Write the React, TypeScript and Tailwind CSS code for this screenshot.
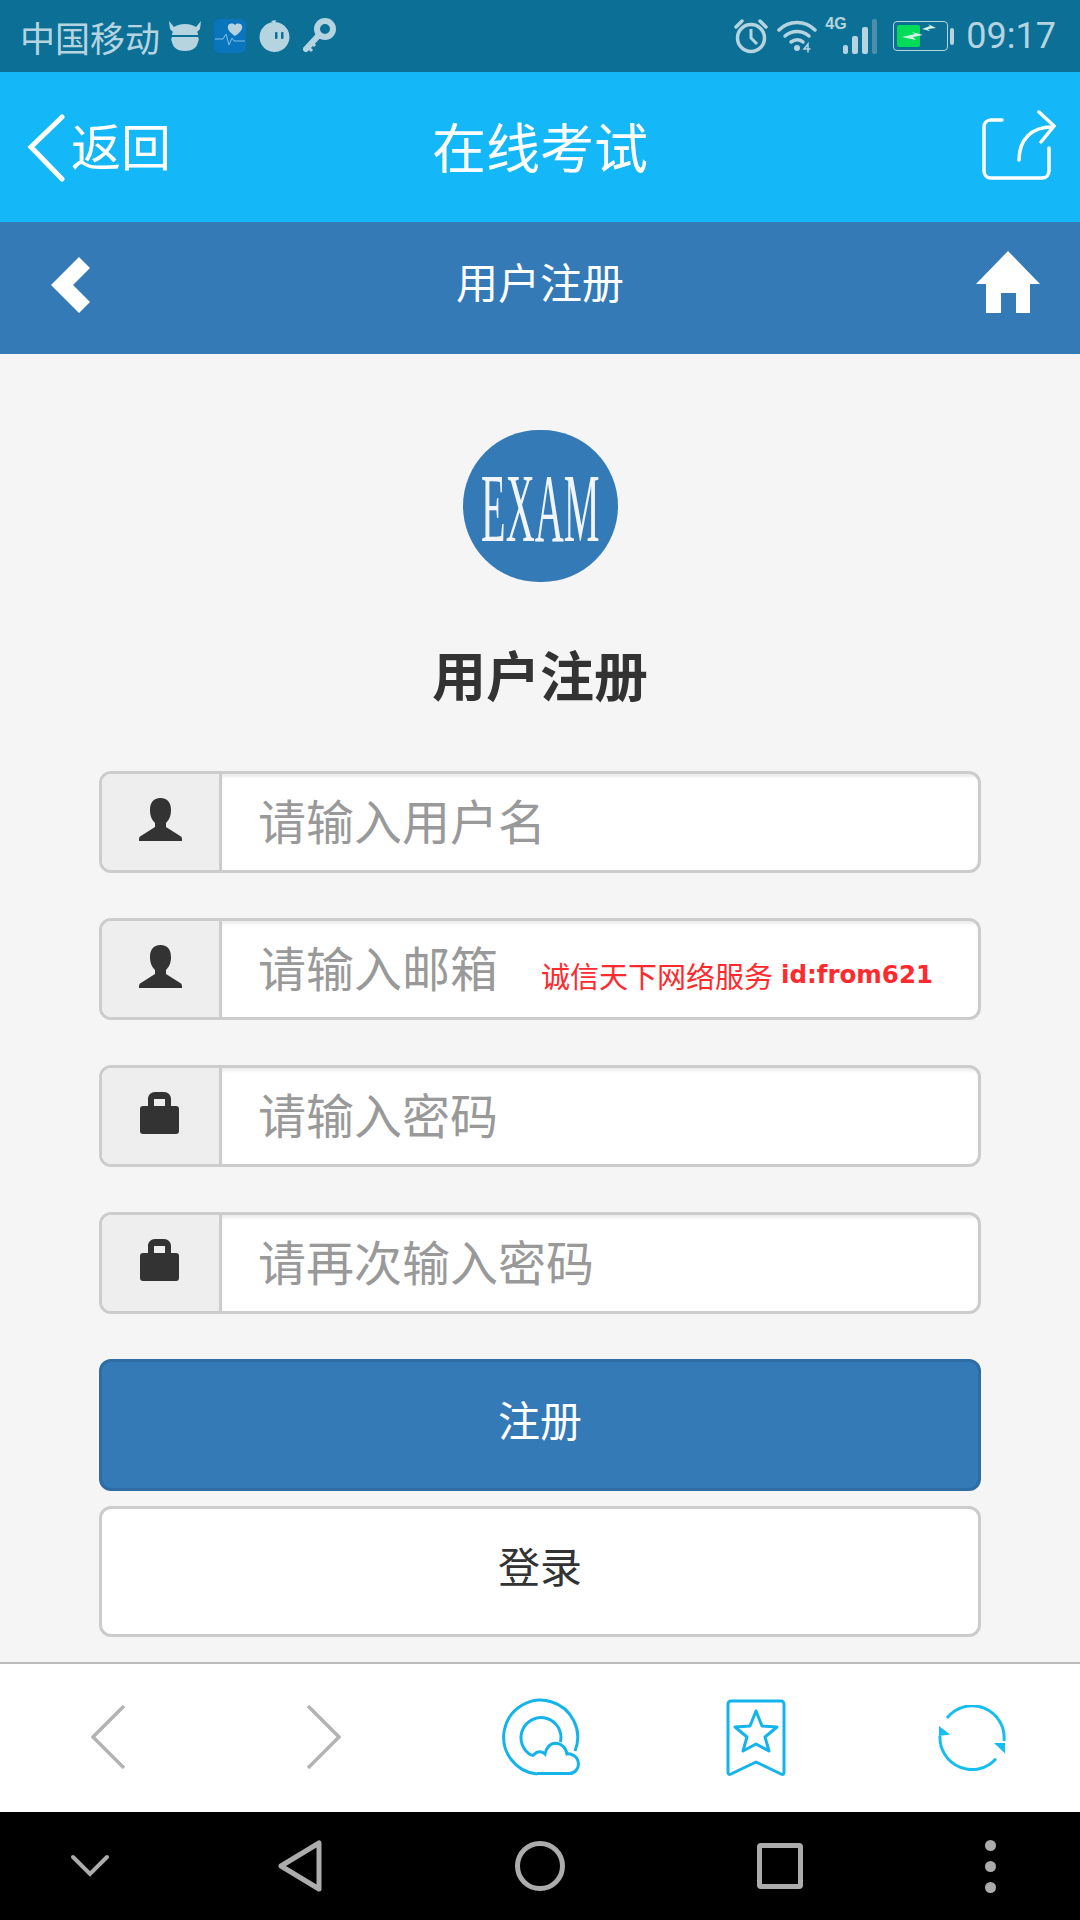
import type { ReactNode } from "react";

const cjk = "font-['Noto_Sans_CJK_SC','Noto_Sans',sans-serif]";

function UserIcon() {
  return (
    <svg width="43" height="43" viewBox="0 0 43 43" fill="#333">
      <path d="M21.5 0C14 0 11 5 11 12c0 6 2 10 5 13v4L1 38.500C0 39.300 0 41 0 43h43c0-2 0-3.700-1-4.500L27 29v-4c3-3 5-7 5-13C32 5 29 0 21.500 0z" />
    </svg>
  );
}

function LockIcon() {
  return (
    <svg className="mr-[2px]" width="39" height="42" viewBox="0 0 39 42" fill="#333">
      <path d="M8 16V7c0-4 3-7 7-7h9c4 0 7 3 7 7v9h-6V7h-11v9z" />
      <rect x="0" y="14" width="39" height="28" rx="3" />
    </svg>
  );
}

function Field({ icon, placeholder, children }: { icon: ReactNode; placeholder: string; children?: ReactNode }) {
  return (
    <div className="relative flex h-[102px] overflow-hidden rounded-[12px] border-[3px] border-[#ccc] bg-white">
      <div className="flex w-[120px] shrink-0 items-center justify-center border-r-[3px] border-[#ccc] bg-[#eee] pb-[6px]">{icon}</div>
      <div className="flex flex-1 items-center pb-[6px] pl-[36px] text-[48px] text-[#999] shadow-[inset_0_3px_3px_rgba(0,0,0,0.075)]">
        {placeholder}
      </div>
      {children}
    </div>
  );
}

function StatusLeftIcons() {
  return (
    <div className="flex items-center gap-[13px]">
      <svg width="32" height="32" viewBox="0 0 32 32" fill="#b5d4e0">
        <path d="M0 1l5 6c3-2 7-3 11-3s8 1 11 3l5-6-1 8-3 3c1 1 1 2 1 3H3c0-1 0-2 1-3L1 9z" />
        <path d="M3 17h26c1 2 1 3 0 5-1 6-6 9-13 9S4 28 3 22c-1-2-1-3 0-5z" />
      </svg>
      <svg width="32" height="34" viewBox="0 0 32 34">
        <rect width="32" height="34" rx="6" fill="#0a75bd" />
        <path d="M21 6c2-2 6-2 7 1 1 3-2 7-7 10-5-3-8-7-7-10 1-3 5-3 7-1z" fill="#b5d4e0" />
        <path d="M1 20h8l3-5 3 11 3-7 2 3h11" fill="none" stroke="#7cc0e6" strokeWidth="1" />
      </svg>
      <svg width="31" height="32" viewBox="0 0 31 32">
        <path d="M15.500 2a15 15 0 1 1-.01 0zM12 1l5-1-1 4z" fill="#b5d4e0" />
        <rect x="16" y="12" width="2.500" height="7" rx="1" fill="#0c7096" />
        <rect x="22" y="12" width="2.500" height="7" rx="1" fill="#0c7096" />
      </svg>
      <svg width="33" height="36" viewBox="0 0 33 36" fill="none">
        <circle cx="22" cy="11" r="8" stroke="#b5d4e0" strokeWidth="6" />
        <path d="M16 17L3 31" stroke="#b5d4e0" strokeWidth="6" strokeLinecap="round" />
        <path d="M5 29l4 4M9 25l3 3" stroke="#b5d4e0" strokeWidth="3" />
      </svg>
    </div>
  );
}

function StatusRightIcons() {
  return (
    <div className="flex items-center">
      <svg width="34" height="36" viewBox="0 0 34 36" fill="none" stroke="#b5d4e0">
        <circle cx="17" cy="20" r="13.500" strokeWidth="3.500" />
        <path d="M17 11v9l6 6" strokeWidth="3" />
        <path d="M2 9l6-6M32 9l-6-6" strokeWidth="3.500" strokeLinecap="round" />
      </svg>
      <svg className="ml-[9px]" width="40" height="34" viewBox="0 0 40 34" fill="none" stroke="#b5d4e0" strokeLinecap="round">
        <path d="M2 11c10-10 26-10 36 0" strokeWidth="3.500" />
        <path d="M8 17c7-6 17-6 24 0" strokeWidth="3.500" />
        <path d="M14 23c4-3 9-3 12 0" strokeWidth="3.500" />
        <circle cx="20" cy="29" r="3" fill="#b5d4e0" stroke="none" />
        <path d="M31 33v-8l-4 5h6" strokeWidth="1.500" />
      </svg>
      <div className="relative ml-[8px] h-[36px] w-[52px]">
        <span className="absolute left-0 top-[-3px] font-['Liberation_Sans',sans-serif] text-[16px] leading-[18px] font-bold text-[#b5d4e0]">4G</span>
        <div className="flex h-full items-end justify-end gap-[4px]">
          <div className="h-[9px] w-[5px] rounded-[2px] bg-[#b5d4e0]" />
          <div className="h-[18px] w-[6px] rounded-[2px] bg-[#b5d4e0]" />
          <div className="h-[27px] w-[6px] rounded-[2px] bg-[#b5d4e0]" />
          <div className="h-[35px] w-[5px] rounded-[2px] bg-[#4d8fa9]" />
        </div>
      </div>
      <div className="ml-[16px] flex items-center gap-[2px]">
        <div className="relative h-[30px] w-[55px] rounded-[4px] border-[1.5px] border-[#b5d4e0] p-[3px]">
          <div className="h-full w-[23px] rounded-[2px] bg-[#00dc5a]" />
          <svg className="absolute left-[8px] top-[1px]" width="34" height="25" viewBox="0 0 34 25" fill="#d3f3e2">
            <path d="M0 14l13-3-3-2 11 3-10 2 3 3zM20 6l8-3-2-2 8 4-8 1 2 2z" />
          </svg>
        </div>
        <div className="h-[17px] w-[4px] rounded-[2px] bg-[#b5d4e0]" />
      </div>
    </div>
  );
}

export default function App() {
  return (
    <div className={`flex h-[1920px] w-[1080px] flex-col overflow-hidden bg-[#f5f5f5] ${cjk}`}>
      {/* status bar */}
      <div className="flex h-[72px] items-center justify-between bg-[#0c7096] pl-[20px] pr-[24px] text-[#b5d4e0]">
        <div className="flex items-center gap-[9px]">
          <span className="text-[35px] leading-none">中国移动</span>
          <StatusLeftIcons />
        </div>
        <div className="flex items-center gap-[12px]">
          <StatusRightIcons />
          <span className="font-['Roboto',sans-serif] text-[36px] leading-none">09:17</span>
        </div>
      </div>

      {/* app bar */}
      <div className="grid h-[150px] grid-cols-[1fr_auto_1fr] items-center bg-[#14b8f8] px-[24px] text-white">
        <div className="flex items-center gap-[6px] pl-[3px]">
          <svg className="mt-[2px]" width="38" height="68" viewBox="0 0 38 68" fill="none" stroke="#fff" strokeWidth="5" strokeLinecap="round">
            <path d="M35 3L4 33l31 32" />
          </svg>
          <span className="pb-[6px] text-[50px] leading-none">返回</span>
        </div>
        <span className="pb-[2px] text-[54px] leading-none">在线考试</span>
        <div className="flex justify-end">
          <svg className="mb-[3px]" width="74" height="72" viewBox="0 0 74 72" fill="none" stroke="#fff" strokeWidth="3.500" strokeLinecap="round">
            <path d="M20 10H9c-4 0-7 3-7 7v44c0 4 3 7 7 7h51c4 0 7-3 7-7V38" />
            <path d="M37 50c0-20 12-33 33-33" />
            <path d="M57 2l15 14-13 16" />
          </svg>
        </div>
      </div>

      {/* page nav */}
      <div className="grid h-[132px] grid-cols-[1fr_auto_1fr] items-center bg-[#337ab7] px-[40px] pb-[7px] text-white">
        <svg className="ml-[11px]" width="40" height="56" viewBox="0 0 40 56" fill="#fff">
          <path d="M28 0l11 11-17 17 17 17-11 11L0 28z" />
        </svg>
        <span className="pb-[7px] text-[42px] leading-none">用户注册</span>
        <div className="flex justify-end">
          <svg className="mb-[5px]" width="64" height="62" viewBox="0 0 64 62" fill="#fff">
            <path d="M32 0l32 33H54v29H40V42H25v20H10V33H0z" />
          </svg>
        </div>
      </div>

      {/* register form */}
      <div className="flex flex-1 flex-col items-center px-[99px] pt-[76px]">
        <div className="flex h-[152px] w-[155px] shrink-0 items-center justify-center rounded-full bg-[#337ab7]">
          <span className="mt-[4px] shrink-0 scale-x-[0.41] font-['Liberation_Serif',serif] text-[98px] leading-none whitespace-nowrap text-[#f1f5f9]">EXAM</span>
        </div>
        <h1 className="mt-[58px] text-[54px] leading-[68px] font-bold text-[#333]">用户注册</h1>
        <div className="mt-[63px] flex w-full flex-col gap-[45px]">
          <Field icon={<UserIcon />} placeholder="请输入用户名" />
          <Field icon={<UserIcon />} placeholder="请输入邮箱">
            <span className="absolute left-[439px] top-[36px] flex items-center whitespace-nowrap text-[29px] leading-[36px] text-[#ff2a2e]">
              诚信天下网络服务
              <b className="ml-[8px] font-['DejaVu_Sans',sans-serif] text-[24.5px]">id:from621</b>
            </span>
          </Field>
          <Field icon={<LockIcon />} placeholder="请输入密码" />
          <Field icon={<LockIcon />} placeholder="请再次输入密码" />
        </div>
        <button className="mt-[45px] h-[132px] w-full rounded-[12px] border-[3px] border-[#2e6da4] bg-[#337ab7] pb-[14px] text-[42px] text-white">
          注册
        </button>
        <button className="mt-[15px] h-[131px] w-full rounded-[12px] border-[3px] border-[#ccc] bg-white pb-[14px] text-[42px] text-[#333]">
          登录
        </button>
      </div>

      {/* browser toolbar */}
      <div className="grid h-[150px] grid-cols-5 items-center border-t-[2px] border-[#bbb] bg-white">
        <div className="flex justify-center">
          <svg className="mb-[3px]" width="34" height="66" viewBox="0 0 34 66" fill="none" stroke="#b3b3b3" strokeWidth="3.500">
            <path d="M33 2L2 33l31 31" />
          </svg>
        </div>
        <div className="flex justify-center">
          <svg className="mb-[3px]" width="34" height="66" viewBox="0 0 34 66" fill="none" stroke="#b3b3b3" strokeWidth="3.500">
            <path d="M1 2l31 31L1 64" />
          </svg>
        </div>
        <div className="flex justify-center">
          <svg width="80" height="80" viewBox="-1 1 80 80" fill="none" stroke="#14b4ea" strokeWidth="3">
            <path d="M36 77A37 37 0 1 1 74 54" />
            <path d="M31 58.500A20 20 0 1 1 59.500 45" />
            <path d="M31 58.500c2 0 3-3 6-3.500 3-.5 5 0 7 2c1-6 5-10.700 10-10.700 6 0 11 4 12 10.700c2-.5 3-.5 4.500.5c4 1 7 5 7 9.500 0 5-4 9.500-9 9.500H36" />
          </svg>
        </div>
        <div className="flex justify-center">
          <svg width="60" height="78" viewBox="0 0 60 78" fill="none" stroke="#14b4ea" strokeWidth="3" strokeLinejoin="round">
            <path d="M5 2h50a3 3 0 0 1 3 3v68c0 2-1 3-3 2L30 63 5 75c-2 1-3 0-3-2V5a3 3 0 0 1 3-3z" />
            <path d="M30 12l6 15 15 1-12 10 4 14-13-7-13 7 4-14-12-10 15-1z" />
          </svg>
        </div>
        <div className="flex justify-center">
          <svg width="68" height="66" viewBox="0 0 68 66" fill="none" stroke="#14bdf2" strokeWidth="3">
            <path d="M9 13A32 32 0 0 1 66 36" />
            <path d="M58 53.700A32 32 0 0 1 2 31" />
            <path d="M56 38h11v10.500zM1 21l11 8.500L1 31z" fill="#14bdf2" stroke="none" />
          </svg>
        </div>
      </div>

      {/* android nav */}
      <div className="grid h-[108px] grid-cols-[180px_240px_240px_240px_180px] items-center justify-items-center bg-black">
        <svg width="40" height="24" viewBox="0 0 40 24" fill="none" stroke="#acacac" strokeWidth="4" strokeLinecap="round">
          <path d="M3 3l17 17L37 3" />
        </svg>
        <svg width="44" height="52" viewBox="0 0 44 52" fill="none" stroke="#acacac" strokeWidth="5" strokeLinejoin="round">
          <path d="M3 26L41 3v46z" />
        </svg>
        <div className="h-[50px] w-[50px] rounded-full border-[5px] border-[#acacac]" />
        <div className="h-[46px] w-[46px] rounded-[4px] border-[5px] border-[#acacac]" />
        <div className="flex flex-col gap-[10px]">
          <div className="h-[11px] w-[11px] rounded-full bg-[#acacac]" />
          <div className="h-[11px] w-[11px] rounded-full bg-[#acacac]" />
          <div className="h-[11px] w-[11px] rounded-full bg-[#acacac]" />
        </div>
      </div>
    </div>
  );
}
